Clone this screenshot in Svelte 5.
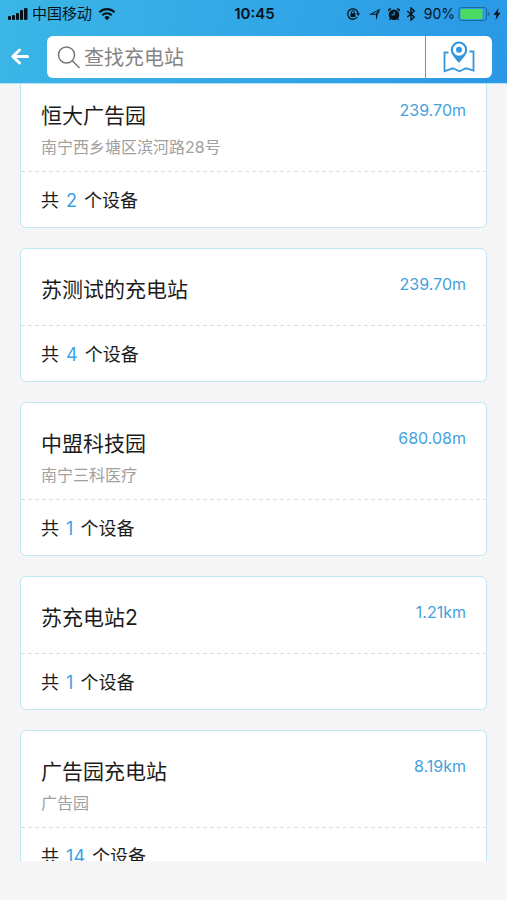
<script>
    import { onMount } from 'svelte';

    let keyword = "";
    let listEl;

    const stations = [
        { id: 1, name: "恒大广告园", address: "南宁西乡塘区滨河路28号", distance: "239.70m", devices: 2 },
        { id: 2, name: "苏测试的充电站", address: "", distance: "239.70m", devices: 4 },
        { id: 3, name: "中盟科技园", address: "南宁三科医疗", distance: "680.08m", devices: 1 },
        { id: 4, name: "苏充电站2", address: "", distance: "1.21km", devices: 1 },
        { id: 5, name: "广告园充电站", address: "广告园", distance: "8.19km", devices: 14 },
    ];

    $: shown = stations.filter((s) => s.name.includes(keyword.trim()));

    onMount(() => {
        listEl.scrollTop = 30;
    });
</script>

<div class="page">
    <header>
        <div class="status">
            <div class="status-left">
                <svg width="20" height="14" viewBox="0 0 20 14">
                    <rect x="0" y="9" width="3" height="4" rx="1" />
                    <rect x="4" y="8" width="3" height="5" rx="1" />
                    <rect x="8" y="6" width="3" height="7" rx="1" />
                    <rect x="12" y="3" width="3" height="10" rx="1" />
                    <rect x="16" y="1" width="3.5" height="12" rx="1" />
                </svg>
                <span class="carrier">中国移动</span>
                <svg width="18" height="14" viewBox="0 0 18 14">
                    <path d="M1.5 5.2a10.6 10.6 0 0 1 15 0" fill="none" stroke="#06131c" stroke-width="2.2" />
                    <path d="M4.3 8.2a6.6 6.6 0 0 1 9.4 0" fill="none" stroke="#06131c" stroke-width="2.1" />
                    <path d="M9 13.2l-2.7-2.8a3.8 3.8 0 0 1 5.4 0z" />
                </svg>
            </div>
            <span class="time">10:45</span>
            <div class="status-right">
                <svg width="14" height="14" viewBox="0 0 14 14">
                    <path d="M11.2 10a5.2 5.2 0 1 1 .9-3.4" fill="none" stroke="#06131c" stroke-width="1.3" />
                    <path d="M10.2 6.3H14l-1.8 2.6z" />
                    <rect x="4.4" y="6.3" width="5" height="3.7" rx=".5" />
                    <path d="M5.4 6.5V5.3a1.5 1.5 0 0 1 3 0v1.2" fill="none" stroke="#06131c" />
                </svg>
                <svg class="arrow" width="13" height="14" viewBox="0 0 13 14">
                    <path fill-rule="evenodd" d="M.8 7.8L12.2 1.800 8 13.200V7.800zM4.500 6.800h3.300L10.400 3.700zM9 7.500v1.700l1.300-3.500z" />
                </svg>
                <svg width="14" height="14" viewBox="0 0 14 14">
                    <circle cx="7" cy="7.7" r="5.3" />
                    <path d="M1.3 4.6a2.2 2.2 0 0 1 3.3-2.8zM12.7 4.6a2.2 2.2 0 0 0-3.3-2.8zM3 10.8l-1.2 2.4 3-1.2zM11 10.8l1.2 2.4-3-1.2z" />
                    <path d="M7.200 4.700v3.200H4.500" fill="none" stroke="#34a5e6" />
                </svg>
                <svg class="bluetooth" width="10" height="14" viewBox="0 0 10 14">
                    <path d="M1.3 4l7 6L5 13V1l3.3 3-7 6" fill="none" stroke="#06131c" stroke-width="1.4" />
                </svg>
                <span class="percent">90%</span>
                <svg width="32" height="16" viewBox="0 0 32 16">
                    <rect x="1" y="1.5" width="27.5" height="13" rx="2.5" fill="none" stroke="#1f6a9c" />
                    <rect x="2.5" y="3" width="22" height="10" rx="1" fill="#4cd95f" />
                    <path d="M29.7 6v4a2 2 0 0 0 0-4z" fill="#1f6a9c" />
                </svg>
                <svg class="bolt" width="8" height="14" viewBox="0 0 8 14">
                    <path d="M5.5 1L.5 8h3L2.500 13l5-7.300h-3z" />
                </svg>
            </div>
        </div>

        <div class="search-row">
            <button class="back" aria-label="返回">
                <svg width="20" height="20" viewBox="0 0 20 20">
                    <path d="M17.5 9.500h-14M9.500 3L2.800 9.500l6.700 6.500" fill="none" stroke="#fff" stroke-width="3" stroke-linecap="round" stroke-linejoin="round" />
                </svg>
            </button>
            <div class="search-box">
                <svg class="magnifier" width="24" height="24" viewBox="0 0 24 24">
                    <circle cx="9.5" cy="10" r="8" />
                    <path d="M15.3 15.8L22.5 23" />
                </svg>
                <input type="text" placeholder="查找充电站" aria-label="查找充电站" bind:value={keyword} />
                <button class="map" aria-label="地图">
                    <svg width="32" height="32" viewBox="0 0 32 32">
                        <path d="M5.500 11.500H1.500v18.800l8.300-3 6.700 3 6.500-3 7.500 2.200V10.500h-4" fill="none" stroke="#3497dd" stroke-width="1.8" />
                        <path fill-rule="evenodd" d="M16 .5a8.200 8.200 0 0 0-8.200 8.200c0 5 6 10.300 8.200 13.300 2.200-3 8.200-8.300 8.200-13.300A8.200 8.200 0 0 0 16 .5zM16 2.600a6.100 6.100 0 1 1 0 12.200 6.100 6.100 0 0 1 0-12.200z" fill="#3497dd" />
                        <circle cx="16" cy="8.7" r="3" fill="#3497dd" />
                    </svg>
                </button>
            </div>
        </div>
    </header>

    <main class="list" bind:this={listEl}>
        {#each shown as station (station.id)}
            <article class="card">
                <div class="head">
                    <div class="info">
                        <h2>{station.name}</h2>
                        {#if station.address}
                            <p class="address">{station.address}</p>
                        {/if}
                    </div>
                    <span class="distance">{station.distance}</span>
                </div>
                <div class="foot">共 <span class="count">{station.devices}</span> 个设备</div>
            </article>
        {/each}
    </main>
</div>

<style>
    :global(body) {
        background: #f5f5f5;
    }

    .page {
        display: flex;
        flex-direction: column;
        box-sizing: border-box;
        height: 100vh;
        padding-bottom: 39px;
        background: #f5f5f5;
        font-family: Inter, "Noto Sans CJK SC", sans-serif;
        color: #1c1c1c;
    }

    header {
        flex: none;
        background: linear-gradient(100deg, #3bb6e6, #2a98e6);
        border-bottom: 1px solid #b5e0f7;
    }

    svg {
        display: block;
        flex: none;
    }

    .status {
        display: grid;
        grid-template-columns: 1fr auto 1fr;
        align-items: center;
        height: 28px;
        padding: 0 6px 0 8px;
        color: #06131c;
        fill: #06131c;
        font-size: 15px;
        line-height: 28px;
    }

    .status-left,
    .status-right {
        display: flex;
        align-items: center;
    }

    .status-right {
        justify-content: flex-end;
    }

    .carrier {
        margin: 0 6px 0 4px;
    }

    .time {
        font-weight: 600;
    }

    .arrow {
        margin: 0 6px 0 8px;
    }

    .bluetooth {
        margin: 0 8px 0 5px;
    }

    .percent {
        margin-right: 3px;
        font-size: 14px;
    }

    .bolt {
        margin-left: 3px;
    }

    .search-row {
        display: flex;
        padding: 8px 15px 5px 0;
    }

    button {
        display: flex;
        align-items: center;
        justify-content: center;
        padding: 0;
        border: none;
        background: none;
        cursor: pointer;
    }

    .back {
        width: 40px;
        margin-right: 7px;
    }

    .search-box {
        display: flex;
        flex: 1;
        align-items: center;
        height: 42px;
        border-radius: 6px;
        background: #fff;
    }

    .magnifier {
        margin: 0 3px 0 10px;
        fill: none;
        stroke: #777;
        stroke-width: 1.5;
    }

    input {
        flex: 1;
        min-width: 0;
        height: 100%;
        padding: 2px 0 0;
        border: none;
        outline: none;
        background: none;
        font-family: inherit;
        font-size: 20px;
        color: #1c1c1c;
    }

    input::placeholder {
        color: #858585;
        opacity: 1;
    }

    .map {
        width: 67px;
        height: 100%;
        border-left: 1px solid #3ba3e6;
    }

    .list {
        flex: 1;
        min-height: 0;
        padding: 0 20px;
        overflow-y: auto;
        scrollbar-width: none;
    }

    .card {
        margin: 20px 0;
        border: 1px solid #bfe6f6;
        border-radius: 6px;
        background: #fff;
    }

    .head {
        display: flex;
        justify-content: space-between;
        box-sizing: border-box;
        min-height: 76px;
        padding: 24px 20px 14px;
    }

    h2 {
        margin: 0;
        font-size: 21px;
        font-weight: 400;
        line-height: 34px;
    }

    .address {
        margin: 4px 0 0;
        font-size: 16px;
        line-height: 20px;
        color: #a0a0a0;
    }

    .distance {
        font-size: 16px;
        line-height: 22px;
        color: #459fdd;
    }

    /* dashed rule with wider gaps than border-style gives */
    .foot {
        padding: 3px 20px 0;
        background: repeating-linear-gradient(90deg, #dcdcdc 0 4px, transparent 4px 7px) top / 100% 1px no-repeat;
        font-size: 18px;
        line-height: 53px;
    }

    .count {
        margin: 0 2px;
        color: #3d9fe6;
    }
</style>
